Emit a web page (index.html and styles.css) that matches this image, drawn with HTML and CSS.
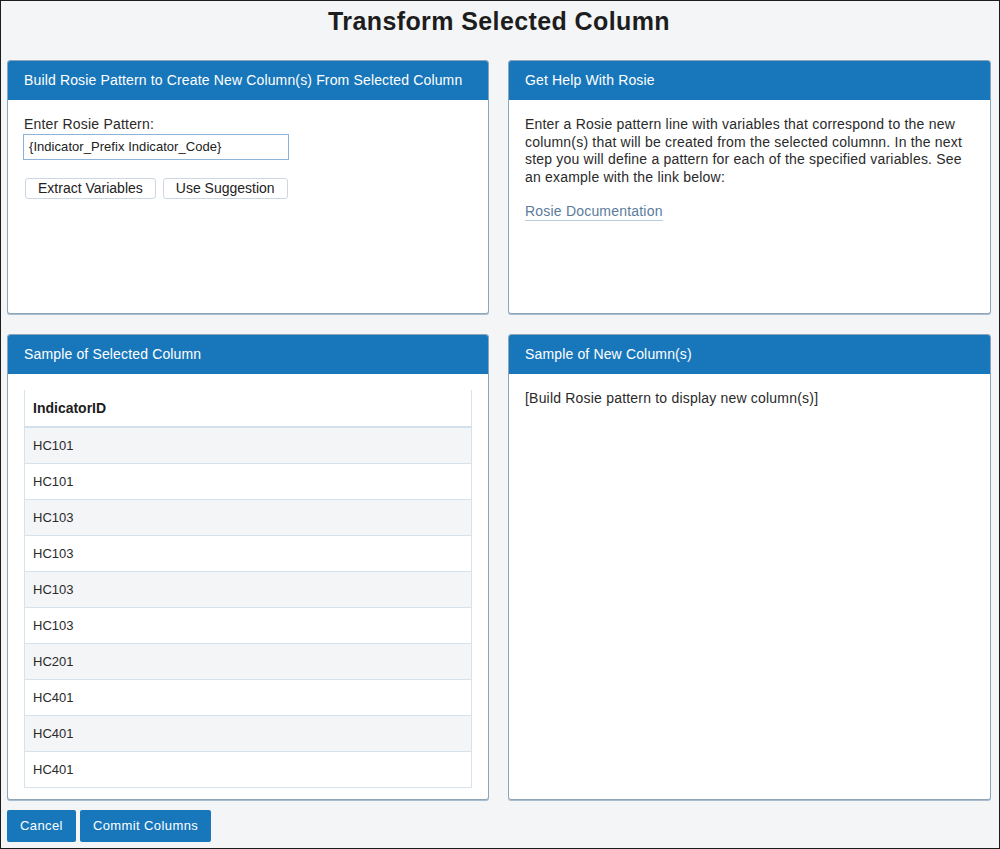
FILE: index.html
```html
<!DOCTYPE html>
<html>
<head>
<meta charset="utf-8">
<link rel="stylesheet" href="styles.css">
</head>
<body>
<div class="page">
  <h1 class="title">Transform Selected Column</h1>
  <div class="grid">
    <section class="panel">
      <div class="panel-head">Build Rosie Pattern to Create New Column(s) From Selected Column</div>
      <div class="panel-body">
        <label class="label">Enter Rosie Pattern:</label>
        <div class="input">{Indicator_Prefix Indicator_Code}</div>
        <div class="btn-row">
          <span class="btn-light">Extract Variables</span>
          <span class="btn-light">Use Suggestion</span>
        </div>
      </div>
    </section>
    <section class="panel">
      <div class="panel-head">Get Help With Rosie</div>
      <div class="panel-body">
        <p class="help">Enter a Rosie pattern line with variables that correspond to the new column(s) that will be created from the selected columnn. In the next step you will define a pattern for each of the specified variables. See an example with the link below:</p>
        <a class="link">Rosie Documentation</a>
      </div>
    </section>
    <section class="panel">
      <div class="panel-head">Sample of Selected Column</div>
      <div class="panel-body">
        <table class="table">
          <thead><tr><th>IndicatorID</th></tr></thead>
          <tbody>
            <tr><td>HC101</td></tr>
            <tr><td>HC101</td></tr>
            <tr><td>HC103</td></tr>
            <tr><td>HC103</td></tr>
            <tr><td>HC103</td></tr>
            <tr><td>HC103</td></tr>
            <tr><td>HC201</td></tr>
            <tr><td>HC401</td></tr>
            <tr><td>HC401</td></tr>
            <tr><td>HC401</td></tr>
          </tbody>
        </table>
      </div>
    </section>
    <section class="panel">
      <div class="panel-head">Sample of New Column(s)</div>
      <div class="panel-body">
        <p class="text">[Build Rosie pattern to display new column(s)]</p>
      </div>
    </section>
  </div>
  <div class="actions">
    <span class="btn-primary">Cancel</span>
    <span class="btn-primary">Commit Columns</span>
  </div>
</div>
</body>
</html>
```
FILE: styles.css
```css
* { box-sizing: border-box; }
html, body { margin: 0; padding: 0; }
body {
  font-family: "Liberation Sans", Arial, sans-serif;
  color: #222;
  background: #f4f5f7;
}
.page {
  width: 1000px;
  height: 849px;
  border: 1px solid #1c1c1c;
  background: #f4f5f7;
  padding: 0 8px 0 6px;
}
.title {
  margin: 6px 0 25px;
  font-size: 25px;
  line-height: 28px;
  letter-spacing: 0.4px;
  font-weight: bold;
  text-align: center;
  color: #1d1d1d;
}
.grid {
  display: grid;
  grid-template-columns: 482px 483px;
  grid-template-rows: 254px 466px;
  column-gap: 19px;
  row-gap: 20px;
}
.panel {
  background: #fff;
  border: 1px solid #8ea4b8;
  border-radius: 3px;
  box-shadow: 0 1px 0 #a9bccd;
  overflow: hidden;
  display: flex;
  flex-direction: column;
}
.panel-head {
  background: #1877bb;
  color: #fff;
  height: 39px;
  line-height: 39px;
  padding: 0 16px;
  font-size: 14px;
  letter-spacing: 0.15px;
  flex: none;
}
.panel-body {
  padding: 16px;
  font-size: 14px;
  letter-spacing: 0.2px;
}
.label {
  display: block;
  line-height: 17px;
  color: #2a2a2a;
}
.input {
  margin: 1px 0 0 -1px;
  width: 266px;
  height: 26px;
  border: 1px solid #8cb4da;
  line-height: 24px;
  padding: 0 5px;
  font-size: 13px;
  letter-spacing: 0.05px;
  color: #222;
  background: #fff;
}
.btn-row {
  display: flex;
  gap: 7px;
  margin: 18px 0 0 1px;
}
.btn-light {
  display: inline-block;
  height: 21px;
  line-height: 19px;
  padding: 0 12px;
  border: 1px solid #cbd8e4;
  border-radius: 3px;
  background: #fff;
  font-size: 14px;
  letter-spacing: 0;
  color: #222;
}
.help {
  margin: 0;
  line-height: 17.5px;
  color: #2a2a2a;
}
.link {
  display: inline-block;
  margin-top: 17px;
  line-height: 17px;
  color: #5a7c9c;
  text-decoration: none;
  border-bottom: 1px solid #b7cde0;
}
.text {
  margin: 0;
  line-height: 17.5px;
  color: #2a2a2a;
}
.table {
  width: 100%;
  border-collapse: collapse;
  border-left: 1px solid #d6e2ec;
  border-right: 1px solid #d6e2ec;
  font-size: 13px;
  letter-spacing: 0;
}
.table th {
  text-align: left;
  font-weight: bold;
  font-size: 14px;
  height: 37px;
  padding: 0 8px;
  border-bottom: 2px solid #d3dfea;
  color: #1d1d1d;
}
.table td {
  height: 36px;
  padding: 0 8px;
  border-bottom: 1px solid #d6e2ec;
  color: #2a2a2a;
}
.table tbody tr:nth-child(odd) td { background: #f4f5f7; }
.actions {
  display: flex;
  gap: 4px;
  margin: 10px 0 0 0;
}
.btn-primary {
  display: inline-block;
  height: 32px;
  line-height: 32px;
  padding: 0 13px;
  background: #1877bb;
  color: #fff;
  border-radius: 2px;
  font-size: 13px;
  letter-spacing: 0.4px;
}
```
